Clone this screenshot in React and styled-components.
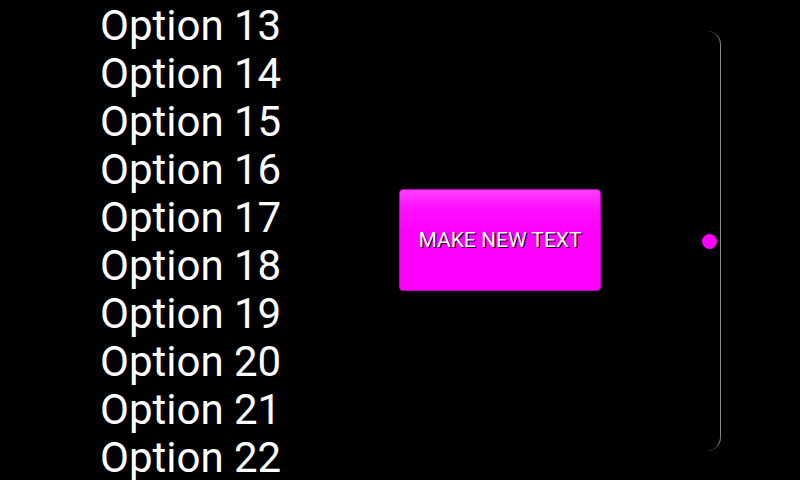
import React from 'react'
import styled, { createGlobalStyle } from 'styled-components'

const GlobalStyle = createGlobalStyle`
  html, body {
    margin: 0;
    padding: 0;
    background: #000;
  }
  body {
    font-family: Roboto, "Noto Sans", sans-serif;
  }
`

const Screen = styled.div`
  display: flex;
  width: 800px;
  height: 480px;
  background: #000;
  overflow: hidden;
`
const OptionList = styled.ul`
  list-style: none;
  margin: 0;
  padding: 2px 0 0 100px;
  width: 200px;
`
const OptionItem = styled.li`
  height: 48px;
  line-height: 48px;
  color: #fff;
  font-size: 42px;
  white-space: nowrap;
`
const Center = styled.div`
  flex: 1;
  display: flex;
  align-items: center;
  justify-content: center;
`
const MakeButton = styled.button`
  width: 202px;
  height: 102px;
  border: 1px solid #c000c0;
  border-radius: 4px;
  background: linear-gradient(#ff40ff 0%, #ff10ff 18%, #ff00ff 40%, #ff00ff 100%);
  color: #fff;
  font-family: Roboto, "Noto Sans", sans-serif;
  font-size: 21px;
  text-shadow: 1px 1px 0 #000;
  padding: 0;
`
const SliderColumn = styled.div`
  width: 100px;
  display: flex;
  padding: 31px 0 29px;
  box-sizing: border-box;
`
const Track = styled.div`
  position: relative;
  width: 14px;
  margin-left: 6px;
  border-right: 1px solid #8a8a8a;
  border-radius: 0 14px 14px 0;
`
const Thumb = styled.div`
  position: absolute;
  left: -4px;
  top: ${p => p.$top}px;
  width: 15px;
  height: 15px;
  border-radius: 50%;
  background: #ff00ff;
`

const options = Array.from({ length: 10 }, (_, i) => `Option ${i + 13}`)

const App = () => (
  <Screen>
    <GlobalStyle />
    <OptionList>
      {options.map(o => <OptionItem key={o}>{o}</OptionItem>)}
    </OptionList>
    <Center>
      <MakeButton>MAKE NEW TEXT</MakeButton>
    </Center>
    <SliderColumn>
      <Track>
        <Thumb $top={203} />
      </Track>
    </SliderColumn>
  </Screen>
)

export default App
